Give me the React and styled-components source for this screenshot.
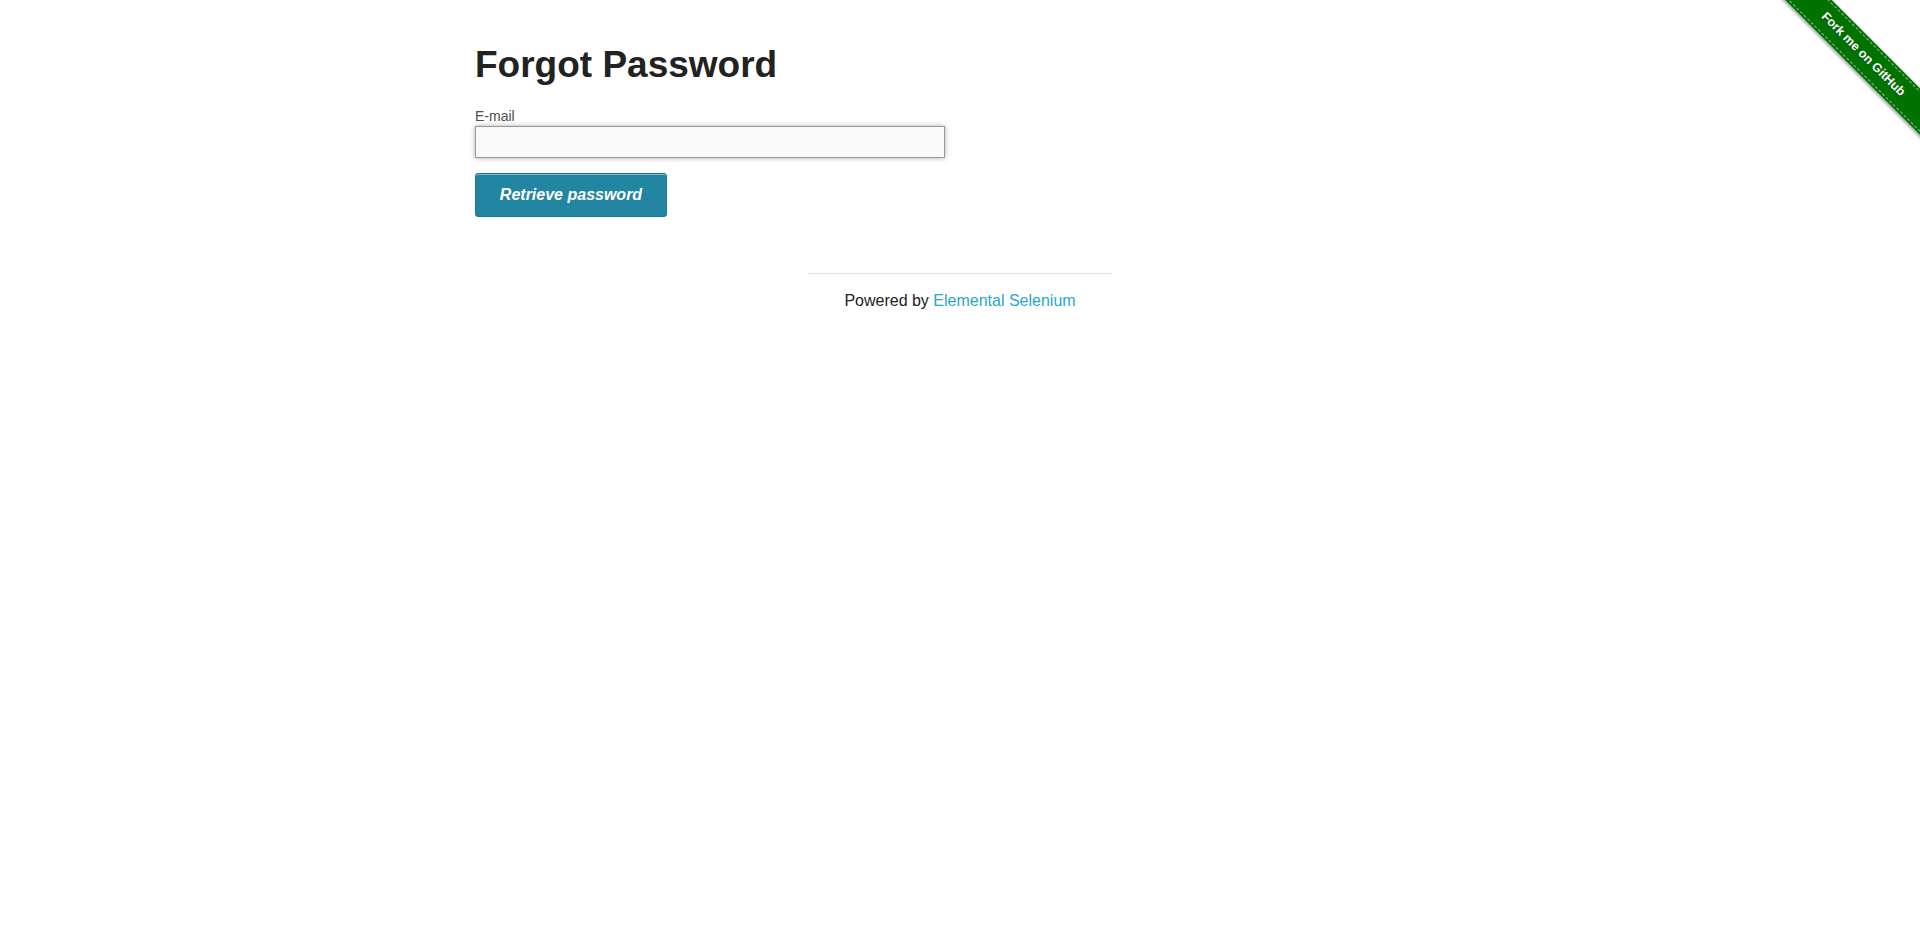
import React from "react";
import styled, { createGlobalStyle } from "styled-components";

const GlobalStyle = createGlobalStyle`
  html, body {
    margin: 0;
    padding: 0;
    background: #ffffff;
  }
  body {
    font-family: "Liberation Sans", Arial, sans-serif;
    color: #222222;
    font-size: 16px;
    line-height: 1.5;
  }
`;

const Page = styled.div`
  max-width: 1000px;
  margin: 0 auto;
  padding: 43px 15px 0;
  box-sizing: border-box;
`;

const Heading = styled.h2`
  margin: 0 0 21px;
  font-size: 37px;
  line-height: 1.2;
  font-weight: bold;
  color: #222222;
`;

const Form = styled.form`
  display: flex;
  flex-direction: column;
  align-items: flex-start;
`;

const Label = styled.label`
  display: block;
  height: 16px;
  margin-bottom: 2px;
  font-size: 14px;
  line-height: 16px;
  color: #4d4d4d;
`;

const Input = styled.input`
  width: 470px;
  height: 32px;
  box-sizing: border-box;
  padding: 0 6px;
  border: 1px solid #999999;
  background: #fafafa;
  box-shadow: 0 0 5px #b0b0b0;
  font-family: "Liberation Sans", Arial, sans-serif;
  font-size: 14px;
  color: #222222;
  outline: none;
  caret-color: #222222;
`;

const Button = styled.button`
  margin-top: 15px;
  width: 192px;
  height: 44px;
  box-sizing: border-box;
  padding: 0;
  border: 1px solid #1e7893;
  border-radius: 3px;
  background: #2285a2;
  box-shadow: inset 0 1px 0 rgba(255, 255, 255, 0.45);
  color: #ffffff;
  font-family: "Liberation Sans", Arial, sans-serif;
  font-size: 16px;
  font-weight: bold;
  font-style: italic;
  cursor: pointer;
`;

const Footer = styled.div`
  width: 333.33px;
  margin: 56px auto 0;
  padding: 0 15px;
  box-sizing: border-box;
`;

const Rule = styled.hr`
  margin: 0 0 15px;
  height: 0;
  border: 0;
  border-top: 1px solid #dddddd;
`;

const Powered = styled.div`
  text-align: center;
  font-size: 16px;
  line-height: 24px;
  color: #222222;
`;

const Link = styled.a`
  color: #2ba6cb;
  text-decoration: none;
`;

const RibbonCorner = styled.a`
  position: absolute;
  top: 0;
  right: 0;
  width: 149px;
  height: 149px;
  overflow: hidden;
  text-decoration: none;
`;

const RibbonBand = styled.div`
  position: absolute;
  left: -18px;
  top: 38px;
  width: 220px;
  height: 33px;
  background: #007200;
  transform: rotate(45deg);
  box-shadow: 0 2px 3px rgba(0, 0, 0, 0.35);
  display: flex;
  align-items: center;
  justify-content: center;

  &::before {
    content: "";
    position: absolute;
    left: 0;
    right: 0;
    top: 2px;
    bottom: 2px;
    border-top: 1px dashed rgba(255, 255, 255, 0.55);
    border-bottom: 1px dashed rgba(255, 255, 255, 0.55);
  }
`;

const RibbonText = styled.span`
  position: relative;
  font-family: "Liberation Sans", Arial, sans-serif;
  font-size: 12.5px;
  font-weight: bold;
  color: #ffffff;
  text-shadow: 0 1px 0 rgba(0, 0, 0, 0.4);
  white-space: nowrap;
`;

const App = () => {
  return (
    <>
      <GlobalStyle />
      <RibbonCorner href="#">
        <RibbonBand>
          <RibbonText>Fork me on GitHub</RibbonText>
        </RibbonBand>
      </RibbonCorner>
      <Page>
        <Heading>Forgot Password</Heading>
        <Form onSubmit={(e) => e.preventDefault()}>
          <Label htmlFor="email">E-mail</Label>
          <Input id="email" type="text" name="email" autoFocus />
          <Button type="submit">Retrieve password</Button>
        </Form>
      </Page>
      <Footer>
        <Rule />
        <Powered>
          Powered by <Link href="#">Elemental Selenium</Link>
        </Powered>
      </Footer>
    </>
  );
};

export default App;
